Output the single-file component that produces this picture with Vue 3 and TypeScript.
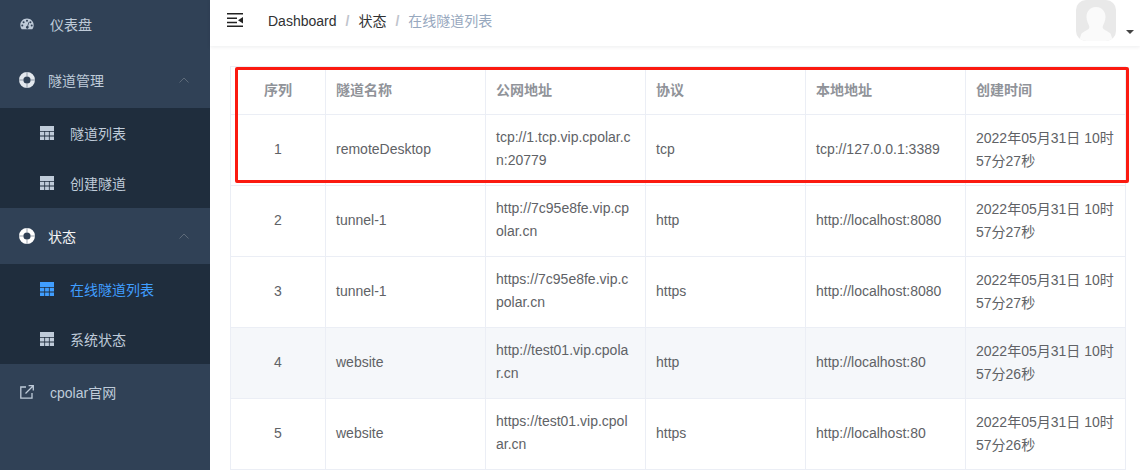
<script setup lang="ts">
interface Row { id: number; name: string; url: string; proto: string; local: string; time: string; hover?: boolean }
const heads = ['序列', '隧道名称', '公网地址', '协议', '本地地址', '创建时间']
const rows: Row[] = [
  { id: 1, name: 'remoteDesktop', url: 'tcp://1.tcp.vip.cpolar.cn:20779', proto: 'tcp', local: 'tcp://127.0.0.1:3389', time: '2022年05月31日 10时57分27秒' },
  { id: 2, name: 'tunnel-1', url: 'http://7c95e8fe.vip.cpolar.cn', proto: 'http', local: 'http://localhost:8080', time: '2022年05月31日 10时57分27秒' },
  { id: 3, name: 'tunnel-1', url: 'https://7c95e8fe.vip.cpolar.cn', proto: 'https', local: 'http://localhost:8080', time: '2022年05月31日 10时57分27秒' },
  { id: 4, name: 'website', url: 'http://test01.vip.cpolar.cn', proto: 'http', local: 'http://localhost:80', time: '2022年05月31日 10时57分26秒', hover: true },
  { id: 5, name: 'website', url: 'https://test01.vip.cpolar.cn', proto: 'https', local: 'http://localhost:80', time: '2022年05月31日 10时57分26秒' },
]
const gridPath = 'M0 0h14v5H0zM0 5.800h4.300v3.800H0zM5.100 5.800h3.800v3.800H5.100zM9.700 5.800H14v3.800H9.700zM0 10.400h4.300V14H0zM5.100 10.400h3.800V14H5.100zM9.700 10.400H14V14H9.700z'
</script>

<template>
  <div class="layout">
    <aside class="sidebar">
      <a class="top-item plain">
        <svg class="ic" viewBox="0 0 14 14"><path fill="currentColor" fill-rule="evenodd" d="M7 1.600C3.200 1.600.3 4.500.3 8.200c0 1.500.4 2.800 1.200 3.800.2.200.4.300.7.300h9.600c.3 0 .5-.1.700-.3.800-1 1.200-2.300 1.200-3.800 0-3.700-2.900-6.600-6.700-6.600zM7 2.800a1 1 0 1 1 0 2 1 1 0 0 1 0-2zM3.600 4.200a1 1 0 1 1 0 2 1 1 0 0 1 0-2zm6.800 0a1 1 0 1 1 0 2 1 1 0 0 1 0-2zM2.300 7.400a1 1 0 1 1 0 2 1 1 0 0 1 0-2zm9.400 0a1 1 0 1 1 0 2 1 1 0 0 1 0-2zM8.500 5.200l.8.3-1.200 3.600a1.400 1.400 0 1 1-2.200 1.200c0-.8.600-1.400 1.400-1.400z"/></svg>
        <span>仪表盘</span>
      </a>

      <a class="top-item group">
        <svg class="ic ring" viewBox="0 0 16 16"><circle cx="8" cy="8" r="5.800" fill="none" stroke="currentColor" stroke-width="4.400"/><path d="M8 0v4.500M8 11.500V16M0 8h4.500M11.500 8H16" stroke="#304156" stroke-opacity=".6" stroke-width=".8"/></svg>
        <span>隧道管理</span>
        <svg class="chev" viewBox="0 0 10 6"><path d="M.5 5.500 5 1l4.500 4.500" fill="none" stroke="currentColor" stroke-width="1"/></svg>
      </a>
      <div class="sub">
        <a class="sub-item"><svg class="ic" viewBox="0 0 14 14"><path fill="currentColor" :d="gridPath"/></svg><span>隧道列表</span></a>
        <a class="sub-item"><svg class="ic" viewBox="0 0 14 14"><path fill="currentColor" :d="gridPath"/></svg><span>创建隧道</span></a>
      </div>

      <a class="top-item group opened">
        <svg class="ic ring" viewBox="0 0 16 16"><circle cx="8" cy="8" r="5.800" fill="none" stroke="currentColor" stroke-width="4.400"/><path d="M8 0v4.500M8 11.500V16M0 8h4.500M11.500 8H16" stroke="#304156" stroke-opacity=".6" stroke-width=".8"/></svg>
        <span>状态</span>
        <svg class="chev" viewBox="0 0 10 6"><path d="M.5 5.500 5 1l4.500 4.500" fill="none" stroke="currentColor" stroke-width="1"/></svg>
      </a>
      <div class="sub">
        <a class="sub-item active"><svg class="ic" viewBox="0 0 14 14"><path fill="currentColor" :d="gridPath"/></svg><span>在线隧道列表</span></a>
        <a class="sub-item"><svg class="ic" viewBox="0 0 14 14"><path fill="currentColor" :d="gridPath"/></svg><span>系统状态</span></a>
      </div>

      <a class="top-item plain">
        <svg class="ic" viewBox="0 0 14 14"><path d="M6 2H.8v11.200H12V8" fill="none" stroke="currentColor" stroke-width="1.300"/><path d="M5.500 8.500 13 1M8.600.7h4.700v4.700" fill="none" stroke="currentColor" stroke-width="1.300"/></svg>
        <span>cpolar官网</span>
      </a>
    </aside>

    <div class="main">
      <header class="navbar">
        <svg class="hamburger" viewBox="0 0 16 14"><path fill="#222" d="M0 0h16v1.500H0zM0 4.500h10V6H0zM0 8.700h10v1.500H0zM0 12.500h16V14H0z"/><path fill="#222" d="M11 7.300 16 4v6.600z"/></svg>
        <nav class="crumbs">
          <span class="link">Dashboard</span><i>/</i>
          <span class="link">状态</span><i>/</i>
          <span class="cur">在线隧道列表</span>
        </nav>
        <div class="user">
          <div class="avatar">
            <svg viewBox="0 0 40 41"><path fill="#fafafa" d="M20 7c-6 0-9.500 4.500-9.500 10 0 3.500 1.500 6.500 2.500 8.500.5 1.500.5 2.500-.5 3.500-1.500 1.500-5 2.500-7 4.500L3 41h34l-2.500-7.500c-2-2-5.500-3-7-4.500-1-1-1-2-.5-3.500 1-2 2.500-5 2.500-8.500 0-5.500-3.500-10-9.500-10z"/></svg>
          </div>
          <span class="caret"></span>
        </div>
      </header>

      <section class="content">
        <div class="table-wrap">
          <table class="grid">
            <colgroup><col class="c0"><col class="cn"><col class="cn"><col class="cn"><col class="cn"><col class="cn"></colgroup>
            <thead>
              <tr><th v-for="(h, i) in heads" :key="h" :class="{ center: i === 0 }"><div class="cell">{{ h }}</div></th></tr>
            </thead>
            <tbody>
              <tr v-for="r in rows" :key="r.id" :class="{ hover: r.hover }">
                <td class="center latin"><div class="cell">{{ r.id }}</div></td>
                <td class="latin"><div class="cell">{{ r.name }}</div></td>
                <td class="latin"><div class="cell">{{ r.url }}</div></td>
                <td class="latin"><div class="cell">{{ r.proto }}</div></td>
                <td class="latin"><div class="cell">{{ r.local }}</div></td>
                <td><div class="cell">{{ r.time }}</div></td>
              </tr>
            </tbody>
          </table>
          <div class="mark"></div>
        </div>
      </section>
    </div>
  </div>
</template>

<style>
html, body { margin: 0; height: 470px; overflow: hidden; background: #fff; }
</style>

<style scoped>
.layout {
  display: flex;
  width: 1140px;
  height: 470px;
  overflow: hidden;
  font-family: "Liberation Sans", "Noto Sans CJK SC", sans-serif;
  font-size: 14px;
}
.sidebar {
  flex: 0 0 210px;
  background: #304156;
  color: #bfcbd9;
  display: flex;
  flex-direction: column;
}
.top-item { display: flex; align-items: center; height: 56px; flex: none; position: relative; }
.top-item:first-child { margin-top: -4px; }
.plain { padding-left: 20px; }
.plain .ic { margin-right: 16px; }
.group { padding-left: 19px; }
.group .ic { margin-right: 13px; color: #e3e8ee; }
.opened { color: #f4f4f5; }
.opened .ic { color: #fff; }
.ic { width: 14px; height: 14px; flex: none; }
.ring { width: 16px; height: 16px; }
.chev { position: absolute; left: 179px; top: 25px; width: 10px; height: 6px; color: #5d6a79; }
.sub { background: #1f2d3d; flex: none; }
.sub-item { display: flex; align-items: center; height: 50px; padding-left: 40px; }
.sub-item .ic { margin-right: 16px; }
.active { color: #409eff; }

.main { flex: 1; min-width: 0; display: flex; flex-direction: column; }
.navbar {
  display: flex;
  align-items: flex-start;
  height: 46px;
  flex: none;
  background: #fff;
  box-shadow: 0 1px 4px rgba(0, 21, 41, .08);
  position: relative;
}
.hamburger { width: 16px; height: 14px; margin: 13px 0 0 17px; flex: none; }
.crumbs { margin: 0 0 0 25px; line-height: 42px; display: flex; color: #303133; }
.crumbs i { font-style: normal; color: #c0c4cc; margin: 0 9px; font-weight: 700; }
.link { color: #303133; }
.cur { color: #97a8be; }
.user { margin-left: auto; margin-right: 6px; display: flex; align-items: flex-start; }
.avatar { width: 40px; height: 41px; border-radius: 10px; background: #e9e9e9; overflow: hidden; }
.avatar svg { display: block; width: 40px; height: 41px; }
.caret { width: 0; height: 0; border: 4px solid transparent; border-top: 4px solid #444; border-bottom: 0; margin: 30px 0 0 10px; }

.content { padding: 20px 14px 0 20px; }
.table-wrap { position: relative; width: 896px; }
.grid {
  width: 896px;
  table-layout: fixed;
  border-collapse: separate;
  border-spacing: 0;
  border-top: 1px solid #ebeef5;
  border-left: 1px solid #ebeef5;
  color: #606266;
}
.c0 { width: 95px; }
.cn { width: 160px; }
th, td {
  padding: 12px 0;
  border-right: 1px solid #ebeef5;
  border-bottom: 1px solid #ebeef5;
  text-align: left;
  font-weight: 400;
}
th { color: #909399; font-weight: 700; }
td.latin { padding: 11px 0 13px; }
.cell { padding: 0 10px; line-height: 23px; word-break: break-all; box-sizing: border-box; }
.center { text-align: center; }
.hover td { background: #f5f7fa; }
.mark {
  position: absolute;
  left: 5px;
  top: 1px;
  width: 894px;
  height: 116px;
  box-sizing: border-box;
  border: 3px solid #fb1a10;
  border-radius: 2px;
  pointer-events: none;
}
</style>
